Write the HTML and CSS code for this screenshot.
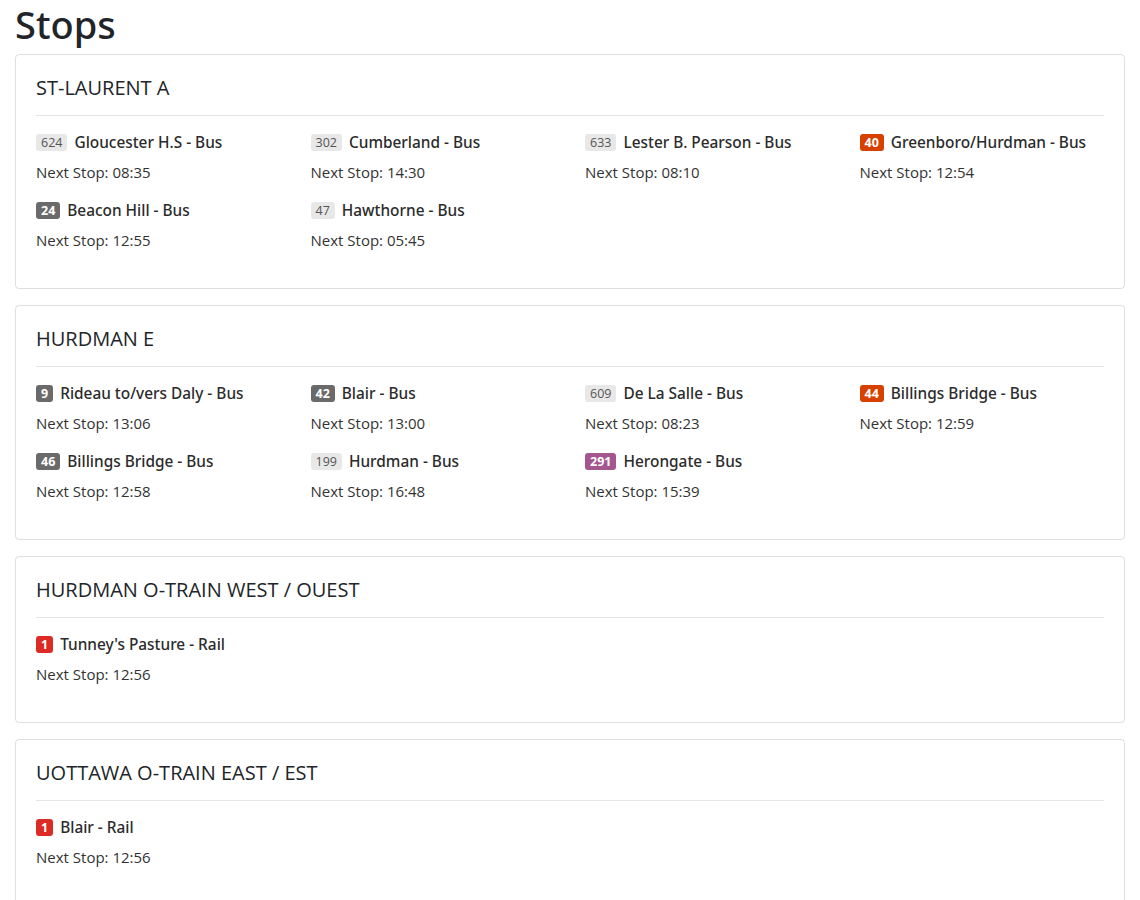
FILE: index.html
```html
<!DOCTYPE html>
<html lang="en">
<head>
<meta charset="utf-8">
<title>Stops</title>
<link rel="stylesheet" href="styles.css">
</head>
<body>
<div class="container">
  <h1 class="page-title">Stops</h1>

  <section class="card">
    <h5 class="card-title">ST-LAURENT A</h5>
    <hr class="divider">
    <div class="routes">
      <div class="route"><div class="route-name"><span class="badge b-light">624</span>Gloucester H.S - Bus</div><p class="next">Next Stop: 08:35</p></div>
      <div class="route"><div class="route-name"><span class="badge b-light">302</span>Cumberland - Bus</div><p class="next">Next Stop: 14:30</p></div>
      <div class="route"><div class="route-name"><span class="badge b-light">633</span>Lester B. Pearson - Bus</div><p class="next">Next Stop: 08:10</p></div>
      <div class="route"><div class="route-name"><span class="badge b-orange">40</span>Greenboro/Hurdman - Bus</div><p class="next">Next Stop: 12:54</p></div>
      <div class="route"><div class="route-name"><span class="badge b-dark">24</span>Beacon Hill - Bus</div><p class="next">Next Stop: 12:55</p></div>
      <div class="route"><div class="route-name"><span class="badge b-light">47</span>Hawthorne - Bus</div><p class="next">Next Stop: 05:45</p></div>
    </div>
  </section>

  <section class="card">
    <h5 class="card-title">HURDMAN E</h5>
    <hr class="divider">
    <div class="routes">
      <div class="route"><div class="route-name"><span class="badge b-dark">9</span>Rideau to/vers Daly - Bus</div><p class="next">Next Stop: 13:06</p></div>
      <div class="route"><div class="route-name"><span class="badge b-dark">42</span>Blair - Bus</div><p class="next">Next Stop: 13:00</p></div>
      <div class="route"><div class="route-name"><span class="badge b-light">609</span>De La Salle - Bus</div><p class="next">Next Stop: 08:23</p></div>
      <div class="route"><div class="route-name"><span class="badge b-orange">44</span>Billings Bridge - Bus</div><p class="next">Next Stop: 12:59</p></div>
      <div class="route"><div class="route-name"><span class="badge b-dark">46</span>Billings Bridge - Bus</div><p class="next">Next Stop: 12:58</p></div>
      <div class="route"><div class="route-name"><span class="badge b-light">199</span>Hurdman - Bus</div><p class="next">Next Stop: 16:48</p></div>
      <div class="route"><div class="route-name"><span class="badge b-purple">291</span>Herongate - Bus</div><p class="next">Next Stop: 15:39</p></div>
    </div>
  </section>

  <section class="card">
    <h5 class="card-title">HURDMAN O-TRAIN WEST / OUEST</h5>
    <hr class="divider">
    <div class="routes">
      <div class="route"><div class="route-name"><span class="badge b-red">1</span>Tunney's Pasture - Rail</div><p class="next">Next Stop: 12:56</p></div>
    </div>
  </section>

  <section class="card">
    <h5 class="card-title">UOTTAWA O-TRAIN EAST / EST</h5>
    <hr class="divider">
    <div class="routes">
      <div class="route"><div class="route-name"><span class="badge b-red">1</span>Blair - Rail</div><p class="next">Next Stop: 12:56</p></div>
    </div>
  </section>
</div>
</body>
</html>
```

FILE: styles.css
```css
html, body {
  margin: 0;
  padding: 0;
  background: #fff;
}

body {
  font-family: "Open Sans", "Noto Sans", "DejaVu Sans", sans-serif;
  color: #212529;
  font-size: 15px;
}

.container {
  width: 1110px;
  padding: 0 15px;
}

.page-title {
  margin: 0 0 6px 0;
  font-family: "Noto Sans", "Open Sans", sans-serif;
  font-size: 38px;
  font-weight: 500;
  line-height: 48px;
  color: #212529;
}

.card {
  border: 1px solid rgba(0, 0, 0, 0.125);
  border-radius: 4px;
  padding: 20px 20px 22px 20px;
  margin-bottom: 16px;
}

.card-title {
  margin: 0;
  font-size: 20px;
  font-weight: 400;
  line-height: 26px;
  color: #212529;
}

.divider {
  margin: 14px 0 0 0;
  border: 0;
  border-top: 1px solid rgba(0, 0, 0, 0.1);
}

.routes {
  display: grid;
  grid-template-columns: repeat(4, 1fr);
  column-gap: 30px;
  margin-top: 14px;
}

.route-name {
  display: flex;
  align-items: center;
  height: 24px;
  margin-bottom: 6px;
  font-family: "Noto Sans", "Open Sans", sans-serif;
  font-weight: 500;
  font-size: 15.4px;
  color: #2b2b2b;
}

.next {
  margin: 0 0 14px 0;
  line-height: 24px;
  font-size: 15px;
  color: #333;
}

.badge {
  display: inline-block;
  font-family: "Open Sans", sans-serif;
  font-size: 12.5px;
  line-height: 17px;
  height: 17px;
  padding: 0 5px;
  border-radius: 3px;
  margin-right: 7px;
  font-weight: 700;
  color: #fff;
}

.b-light {
  background: #e8e8e8;
  color: #555;
  font-weight: 400;
  padding: 0 5px;
}

.b-dark { background: #6a6a6a; }
.b-orange { background: #d74100; }
.b-purple { background: #a5568f; }
.b-red { background: #dc2b25; }
```
